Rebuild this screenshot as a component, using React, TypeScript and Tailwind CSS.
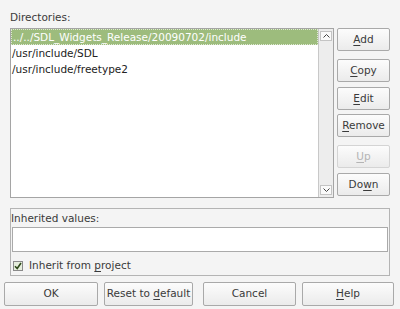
const dirs = [
  "../../SDL_Widgets_Release/20090702/include",
  "/usr/include/SDL",
  "/usr/include/freetype2",
];

function Btn({
  label,
  u,
  className,
  disabled,
}: {
  label: string;
  u: number;
  className: string;
  disabled?: boolean;
}) {
  return (
    <button
      className={
        "flex items-center justify-center whitespace-nowrap rounded-[2px] border bg-gradient-to-b from-[#fcfcfc] to-[#ebebeb] " +
        (disabled ? "border-[#d4d4d4] text-[#b4b4b4] " : "border-[#a9a9a9] text-[#3a3a3a] ") +
        className
      }
    >
      {u < 0 ? (
        <span>{label}</span>
      ) : (
        <span>
          {label.slice(0, u)}
          <span className="underline underline-offset-2">{label[u]}</span>
          {label.slice(u + 1)}
        </span>
      )}
    </button>
  );
}

export default function App() {
  return (
    <div
      className="w-[400px] h-[309px] bg-[#f4f4f4] text-[10.5px] text-[#3a3a3a] flex flex-col"
      style={{ fontFamily: '"DejaVu Sans", Verdana, sans-serif' }}
    >
      <div className="ml-[10px] mt-[10px] h-[18px] leading-[14px]">Directories:</div>

      <div className="flex ml-[10px]">
        {/* list */}
        <div className="w-[324px] h-[170px] border border-[#a5a5a5] bg-white flex">
          <div className="flex-1 flex flex-col">
            {dirs.map((d, i) => (
              <div
                key={d}
                className={
                  "h-[16px] leading-[14px] pl-[1px] whitespace-nowrap " +
                  (i === 0
                    ? "bg-[#9dbc7d] text-white border border-dotted border-[#dfe9d4]"
                    : "text-[#222] pt-[1px]")
                }
              >
                {d}
              </div>
            ))}
          </div>
          {/* scrollbar */}
          <div className="w-[15px] bg-[#ededed] border-l border-[#c8c8c8] flex flex-col justify-between items-center py-[2px]">
            <div className="w-[12px] h-[10px] bg-[#fafafa] border border-[#c4c4c4] flex items-center justify-center">
              <svg width="7" height="4" viewBox="0 0 7 4">
                <path d="M0.5 3.5L3.5 0.5L6.5 3.5" fill="none" stroke="#444" strokeWidth="1" />
              </svg>
            </div>
            <div className="w-[12px] h-[10px] bg-[#fafafa] border border-[#c4c4c4] flex items-center justify-center">
              <svg width="7" height="4" viewBox="0 0 7 4">
                <path d="M0.5 0.5L3.5 3.5L6.5 0.5" fill="none" stroke="#444" strokeWidth="1" />
              </svg>
            </div>
          </div>
        </div>

        {/* side buttons */}
        <div className="ml-[3px] flex flex-col w-[53px]">
          <Btn label="Add" u={0} className="h-[23px]" />
          <Btn label="Copy" u={0} className="h-[23px] mt-[8px]" />
          <Btn label="Edit" u={0} className="h-[23px] mt-[5px]" />
          <Btn label="Remove" u={0} className="h-[23px] mt-[4px]" />
          <Btn label="Up" u={0} className="h-[23px] mt-[8px]" disabled />
          <Btn label="Down" u={2} className="h-[23px] mt-[5px]" />
        </div>
      </div>

      {/* inherited group */}
      <div className="ml-[10px] mt-[10px] w-[380px] h-[68px] border border-[#b4b4b4] flex flex-col">
        <div className="h-[18px] leading-[16px] pt-[1px]">Inherited values:</div>
        <div className="ml-[1px] w-[376px] h-[25px] bg-white border border-[#aaa]" />
        <div className="flex items-center mt-[6px] ml-[2px]">
          <div className="w-[10px] h-[10px] border border-[#8a8a8a] bg-[#e6eedd] flex items-center justify-center">
            <svg width="8" height="8" viewBox="0 0 8 8">
              <path d="M1 4.2L3.2 6.5L7 1" fill="none" stroke="#2e4a1a" strokeWidth="1.6" />
            </svg>
          </div>
          <span className="ml-[6px]">
            Inherit from <span className="underline underline-offset-2">p</span>roject
          </span>
        </div>
      </div>

      {/* bottom buttons */}
      <div className="flex mt-[6px] ml-[4px]">
        <Btn label="OK" u={-1} className="w-[94px] h-[24px]" />
        <Btn label="Reset to default" u={9} className="w-[89px] h-[24px] ml-[6px]" />
        <Btn label="Cancel" u={-1} className="w-[93px] h-[24px] ml-[10px]" />
        <Btn label="Help" u={0} className="w-[92px] h-[24px] ml-[6px]" />
      </div>
    </div>
  );
}
